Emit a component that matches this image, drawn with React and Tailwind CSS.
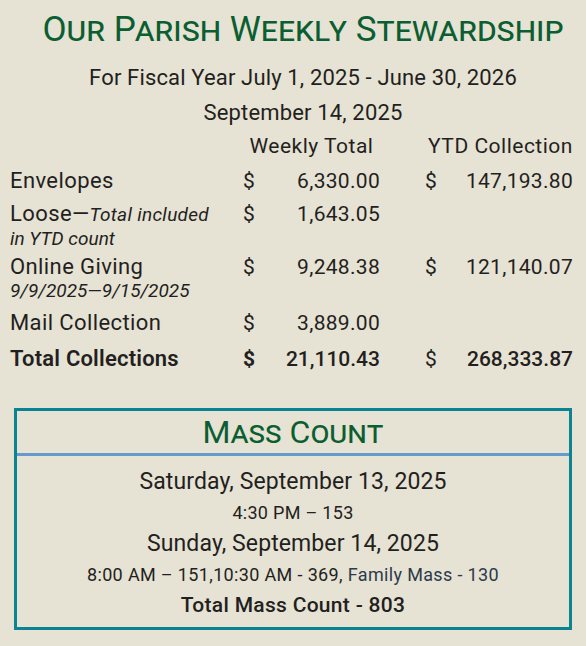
import React from 'react';

const rows = [
  { label: 'Envelopes', week: '6,330.00', ytd: '147,193.80', mt: 'mt-[9px]' },
  { label: 'Loose—', note: 'Total included', note2: 'in YTD count', week: '1,643.05', mt: 'mt-[9px]' },
  { label: 'Online Giving', note2: '9/9/2025—9/15/2025', week: '9,248.38', ytd: '121,140.07', mt: 'mt-[4px]' },
  { label: 'Mail Collection', week: '3,889.00', mt: 'mt-[8px]' },
];

const cols = 'grid grid-cols-[233px_12px_125px_45px_12px_136px] pl-[10px]';

const App = () => {
  return (
    <div className="min-h-screen w-[586px] bg-[#e6e2d4] text-[#231f20] font-['Roboto',sans-serif] overflow-hidden">
      {/* Header */}
      <div className="pl-[20px] text-center">
        <h1 className="pt-[10px] text-[35px] leading-[40px] text-[#0b5e31] [font-variant:small-caps]">
          Our Parish Weekly Stewardship
        </h1>
        <p className="mt-[14px] text-[22px] leading-[28px] tracking-[0.15px]">
          For Fiscal Year July 1, 2025 - June 30, 2026
        </p>
        <p className="mt-[7px] text-[22px] leading-[28px] tracking-[0.15px]">
          September 14, 2025
        </p>
      </div>

      {/* Collections table */}
      <div className={`${cols} mt-[5px] text-[21px] leading-[28px] tracking-[0.5px] whitespace-nowrap`}>
        <div />
        <div className="col-span-2 text-center">Weekly Total</div>
        <div />
        <div className="col-span-2 text-center pl-[3px]">YTD Collection</div>
      </div>

      {rows.map((r) => (
        <div key={r.label} className={`${cols} ${r.mt} text-[22px] leading-[24px]`}>
          <div>
            <div className="whitespace-nowrap tracking-[0.4px]">
              {r.label}
              {r.note && <span className="italic text-[19px] tracking-[0.3px]">{r.note}</span>}
            </div>
            {r.note2 && <div className="italic text-[19px] leading-[24px]">{r.note2}</div>}
          </div>
          <div className="text-[21px]">$</div>
          <div className="text-right text-[21px] tracking-[0.3px]">{r.week}</div>
          <div />
          <div className="text-[21px]">{r.ytd ? '$' : ''}</div>
          <div className="text-right text-[21px] tracking-[0.3px]">{r.ytd || ''}</div>
        </div>
      ))}

      <div className={`${cols} mt-[12px] text-[21px] leading-[24px] font-medium`}>
        <div className="text-[22px] font-semibold tracking-[0.2px]">Total Collections</div>
        <div className="font-bold">$</div>
        <div className="text-right">21,110.43</div>
        <div />
        <div className="font-normal">$</div>
        <div className="text-right">268,333.87</div>
      </div>

      {/* Mass count */}
      <div className="mx-[14px] mt-[37px] border-[3px] border-[#0a8392]">
        <h2 className="h-[42px] flex items-center justify-center text-[32px] text-[#0b5e31] [font-variant:small-caps] leading-none">
          Mass Count
        </h2>
        <div className="h-[3px] bg-[#6699cc]" />
        <div className="pt-[10px] pb-[6px] text-center leading-[31px]">
          <p className="text-[23px] tracking-[0.1px]">Saturday, September 13, 2025</p>
          <p className="text-[18px] tracking-[0.3px]">4:30 PM – 153</p>
          <p className="text-[23px] tracking-[0.1px]">Sunday, September 14, 2025</p>
          <p className="text-[18px] tracking-[0.35px]">
            8:00 AM – 151,10:30 AM - 369, <span className="text-[#2d3a4a]">Family Mass - 130</span>
          </p>
          <p className="text-[21px] font-medium tracking-[0.3px]">Total Mass Count - 803</p>
        </div>
      </div>
    </div>
  );
};

export default App;
